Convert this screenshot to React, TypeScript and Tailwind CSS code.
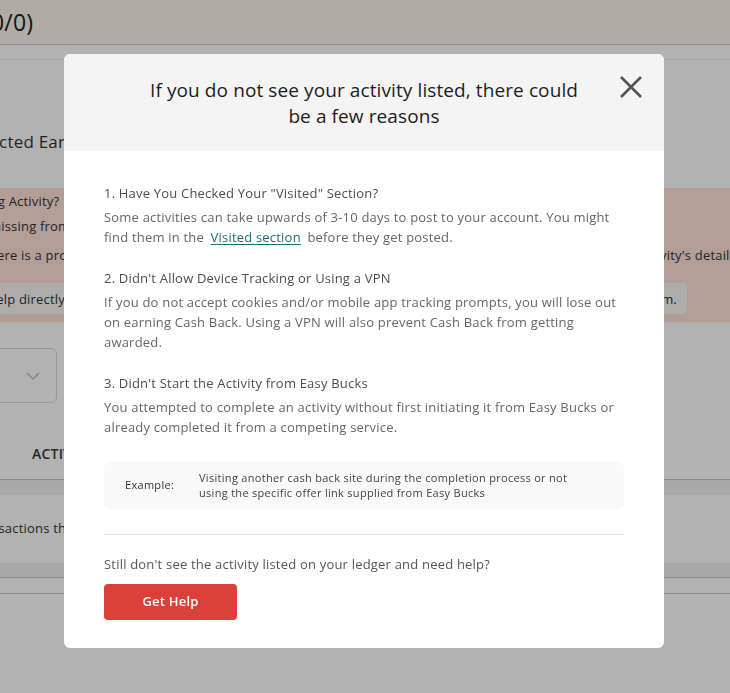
import React from 'react';

const CloseIcon = () => (
  <svg width="24" height="24" viewBox="0 0 24 24" fill="none">
    <path d="M2 2L22 22M22 2L2 22" stroke="#555555" strokeWidth="2.6" strokeLinecap="butt" />
  </svg>
);

const ChevronDown = () => (
  <svg width="14" height="8" viewBox="0 0 14 8" fill="none">
    <path d="M1 1L7 7L13 1" stroke="#bdbdbd" strokeWidth="1.4" />
  </svg>
);

const BackgroundPage = () => (
  <div className="min-h-[693px] bg-white overflow-hidden">
    <header className="h-[45px] bg-[#fbf6ed] border-b border-[#cfc9c0] flex items-center">
      <span className="-ml-[16px] text-[23px] text-[#222] whitespace-nowrap">(0/0)</span>
    </header>
    <div className="h-[15px] border-b border-[#ececec]" />
    <p className="mt-[70px] -ml-[40px] text-[17px] leading-6 text-[#333] whitespace-nowrap">
      Expected Earnings
    </p>
    <div className="mt-[34px] h-[134px] bg-[#ffe2d9] pt-[3px] text-[13px] leading-5 text-[#333] whitespace-nowrap">
      <p className="-ml-[42px]">Missing Activity?</p>
      <p className="mt-[5px] -ml-[11px]">missing from your account</p>
      <div className="mt-[9px] flex justify-between">
        <span className="-ml-[16px]">there is a problem</span>
        <span className="-mr-[6px]">activity's details</span>
      </div>
      <div className="mt-[18px] mr-[43px] h-[31px] rounded-r bg-[#fbf8f7] flex items-center justify-between">
        <span className="-ml-[12px]">help directly</span>
        <span className="pr-[10px]">form.</span>
      </div>
    </div>
    <div className="mt-[26px] -ml-[20px] w-[77px] h-[55px] rounded-md border border-[#dadada] flex items-center justify-end pr-[16px]">
      <ChevronDown />
    </div>
    <div className="mt-[40px] flex h-[21px] items-center pl-[32px]">
      <span className="text-[14px] font-semibold text-[#3a3a3a]">ACTIVITY</span>
    </div>
    <div className="mt-[15px] border-b border-[#c4c4c4]" />
    <div className="h-[15px] bg-[#f2f2f2]" />
    <div className="h-[68px] flex items-center">
      <span className="-ml-[30px] text-[13px] text-[#333] whitespace-nowrap">Transactions that</span>
    </div>
    <div className="h-[15px] bg-[#f2f2f2] border-b border-[#c4c4c4]" />
    <div className="h-[16px] border-b border-[#c4c4c4]" />
  </div>
);

const Section = ({ title, children }: { title: string; children: React.ReactNode }) => (
  <div>
    <h3 className="text-[13px] leading-5 font-medium text-[#4d4d4d]">{title}</h3>
    <p className="mt-[4px] text-[13px] leading-5 text-[#666]">{children}</p>
  </div>
);

const ReasonsModal = () => (
  <div className="w-[600px] rounded-md bg-white overflow-hidden">
    <div className="relative h-[97px] bg-[#f4f4f4] flex items-center justify-center">
      <h2 className="text-center text-[19px] leading-[26px] tracking-[0.1px] text-[#1d1d1d]">
        If you do not see your activity listed, there could
        <br />
        be a few reasons
      </h2>
      <button className="absolute right-[21px] top-[21px]">
        <CloseIcon />
      </button>
    </div>
    <div className="px-10 pt-[32px] pb-[28px]">
      <div className="flex flex-col gap-[21px]">
        <Section title={'1. Have You Checked Your "Visited" Section?'}>
          Some activities can take upwards of 3-10 days to post to your account. You might find them in
          the{' '}
          <a href="#" className="mx-[3px] text-[#1c6b78] underline underline-offset-2">
            Visited section
          </a>{' '}
          before they get posted.
        </Section>
        <Section title="2. Didn't Allow Device Tracking or Using a VPN">
          If you do not accept cookies and/or mobile app tracking prompts, you will lose out on earning
          Cash Back. Using a VPN will also prevent Cash Back from getting awarded.
        </Section>
        <Section title="3. Didn't Start the Activity from Easy Bucks">
          You attempted to complete an activity without first initiating it from Easy Bucks or already
          completed it from a competing service.
        </Section>
      </div>
      <div className="mt-[24px] h-[48px] rounded-md bg-[#f9f9f9] flex items-center pl-[21px] pr-[40px] tracking-[0.3px]">
        <span className="w-[74px] shrink-0 text-[11px] text-[#333]">Example:</span>
        <p className="text-[11px] leading-[15px] text-[#444]">
          Visiting another cash back site during the completion process or not using the specific offer
          link supplied from Easy Bucks
        </p>
      </div>
      <hr className="mt-[25px] border-[#dedede]" />
      <p className="mt-[19px] text-[13px] leading-5 text-[#555]">
        Still don't see the activity listed on your ledger and need help?
      </p>
      <button className="mt-[10px] h-[36px] w-[133px] rounded bg-[#d9413a] text-[13px] font-semibold text-white">
        Get Help
      </button>
    </div>
  </div>
);

export default function App() {
  return (
    <div className="relative font-['Open_Sans',sans-serif] tracking-[0.2px]">
      <BackgroundPage />
      <div className="fixed inset-0 bg-black/30 flex justify-start items-start pl-[64px] pt-[54px]">
        <ReasonsModal />
      </div>
    </div>
  );
}
